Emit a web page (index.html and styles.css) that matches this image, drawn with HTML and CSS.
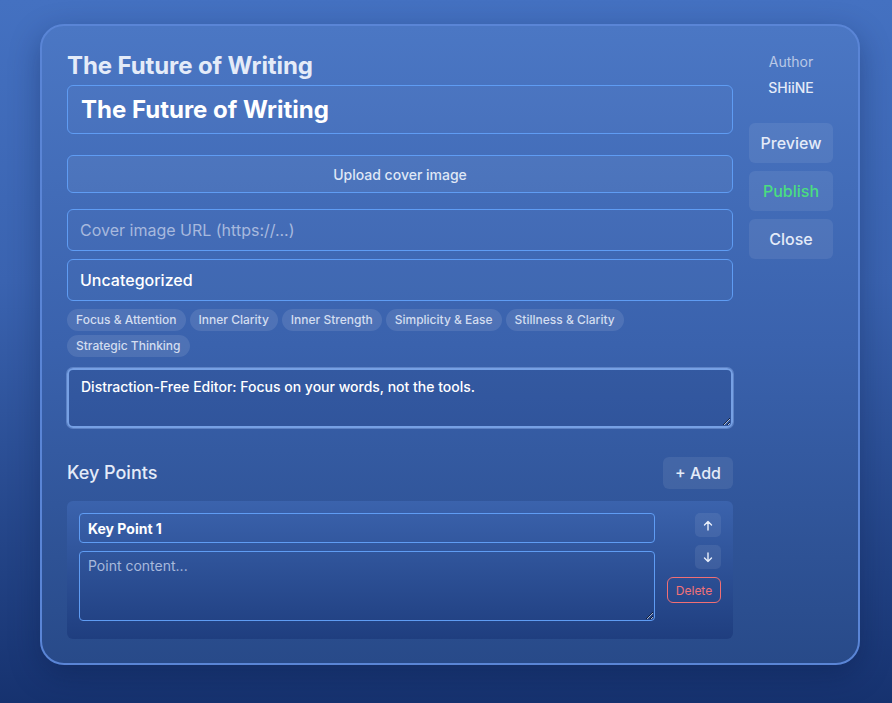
FILE: index.html
```html
<!DOCTYPE html>
<html lang="en">
<head>
<meta charset="utf-8">
<title>Editor</title>
<link rel="stylesheet" href="styles.css">
</head>
<body>
<div class="card">
  <div class="main">
    <h1 class="heading">The Future of Writing</h1>
    <input class="field title-field" type="text" value="The Future of Writing">
    <button class="upload">Upload cover image</button>
    <input class="field url-field" type="text" placeholder="Cover image URL (https://...)">
    <div class="field select-field">Uncategorized</div>
    <div class="tags">
      <span class="tag">Focus &amp; Attention</span>
      <span class="tag">Inner Clarity</span>
      <span class="tag">Inner Strength</span>
      <span class="tag">Simplicity &amp; Ease</span>
      <span class="tag">Stillness &amp; Clarity</span>
      <span class="tag">Strategic Thinking</span>
    </div>
    <textarea class="summary">Distraction-Free Editor: Focus on your words, not the tools.</textarea>
    <div class="kp-header">
      <h2 class="kp-title">Key Points</h2>
      <button class="add-btn">+ Add</button>
    </div>
    <div class="kp-box">
      <div class="kp-fields">
        <input class="kp-name" type="text" value="Key Point 1">
        <textarea class="kp-content" placeholder="Point content..."></textarea>
      </div>
      <div class="kp-controls">
        <button class="arrow-btn" aria-label="Move up"><svg width="10" height="11" viewBox="0 0 10 11"><path d="M5 10V1.5M1.5 5L5 1.5 8.5 5" fill="none" stroke="#e8eefa" stroke-width="1.4" stroke-linecap="round" stroke-linejoin="round"/></svg></button>
        <button class="arrow-btn" aria-label="Move down"><svg width="10" height="11" viewBox="0 0 10 11"><path d="M5 1v8.5M1.5 6L5 9.5 8.5 6" fill="none" stroke="#e8eefa" stroke-width="1.4" stroke-linecap="round" stroke-linejoin="round"/></svg></button>
        <button class="delete-btn">Delete</button>
      </div>
    </div>
  </div>
  <aside class="side">
    <div class="author-label">Author</div>
    <div class="author-name">SHiiNE</div>
    <div class="actions">
      <button class="side-btn">Preview</button>
      <button class="side-btn publish">Publish</button>
      <button class="side-btn">Close</button>
    </div>
  </aside>
</div>
</body>
</html>
```

FILE: styles.css
```css
* { box-sizing: border-box; }
html, body { height: 100%; }
body {
  margin: 0;
  padding: 24px 32px 0 40px;
  font-family: Inter, "Noto Sans", sans-serif;
  background: linear-gradient(180deg, #4471c1 0%, #3a63b0 40%, #16326f 100%);
  color: #fff;
  overflow: hidden;
}
button, input, textarea { font-family: inherit; }

.card {
  display: flex;
  gap: 16px;
  width: 820px;
  padding: 24px 25px 24px 25px;
  border: 2px solid #5a85d6;
  border-radius: 24px;
  background: linear-gradient(180deg, #4b77c4 0%, #3a62ad 50%, #284a89 100%);
  box-shadow: 0 10px 30px rgba(10, 25, 70, 0.35);
}

.main { flex: 1; display: flex; flex-direction: column; min-width: 0; }

.heading {
  margin: 1px 0 4px;
  font-size: 24px;
  line-height: 30px;
  font-weight: 700;
  letter-spacing: -0.1px;
  color: #e4ebf8;
}

.field {
  width: 100%;
  border: 1px solid #5f9cf3;
  border-radius: 6px;
  background: rgba(255, 255, 255, 0.02);
  color: #fff;
  outline: none;
}
.title-field {
  height: 49px;
  padding: 0 13px;
  font-size: 24px;
  font-weight: 700;
}
.upload {
  margin-top: 21px;
  height: 38px;
  border: 1px solid #5f9cf3;
  border-radius: 6px;
  background: rgba(255, 255, 255, 0.05);
  color: #dfe7f6;
  font-size: 14px;
  font-weight: 500;
}
.url-field {
  margin-top: 16px;
  height: 42px;
  padding: 0 12px;
  font-size: 16px;
}
.url-field::placeholder { color: #a7b9de; }
.select-field {
  margin-top: 8px;
  height: 42px;
  padding: 0 12px;
  font-size: 16px;
  font-weight: 500;
  display: flex;
  align-items: center;
}

.tags {
  margin-top: 8px;
  display: flex;
  flex-wrap: wrap;
  gap: 4px 4px;
  padding-right: 90px;
}
.tag {
  height: 22px;
  padding: 0 9px;
  border-radius: 11px;
  background: rgba(255, 255, 255, 0.1);
  color: #d3ddf0;
  font-size: 12px;
  font-weight: 500;
  line-height: 22px;
}

.summary {
  margin-top: 11px;
  height: 60px;
  width: 100%;
  padding: 7px 12px 5px;
  border: 2px solid #76a0e4;
  box-shadow: 0 0 0 1px rgba(140, 175, 235, 0.45);
  border-radius: 6px;
  background: rgba(10, 30, 90, 0.1);
  color: #fff;
  font-size: 14px;
  font-weight: 500;
  line-height: 20px;
  outline: none;
}

.kp-header {
  margin-top: 29px;
  display: flex;
  align-items: center;
  justify-content: space-between;
}
.kp-title {
  margin: 0 0 2px;
  font-size: 18px;
  font-weight: 500;
  color: #e4ebf8;
}
.add-btn {
  height: 32px;
  width: 70px;
  border: 0;
  border-radius: 6px;
  background: rgba(255, 255, 255, 0.08);
  color: #e4ebf8;
  font-size: 16px;
  font-weight: 500;
}

.kp-box {
  margin-top: 12px;
  display: flex;
  gap: 12px;
  padding: 12px 12px 18px;
  border-radius: 6px;
  background: linear-gradient(180deg, #3b63ad 0%, #1f3e7f 100%);
}
.kp-fields { flex: 1; display: flex; flex-direction: column; gap: 8px; }
.kp-name {
  height: 30px;
  padding: 0 8px;
  border: 1px solid #5f9cf3;
  border-radius: 4px;
  background: transparent;
  color: #fff;
  font-size: 14px;
  font-weight: 700;
  outline: none;
}
.kp-content {
  height: 70px;
  padding: 5px 8px;
  border: 1px solid #5f9cf3;
  border-radius: 4px;
  background: transparent;
  color: #fff;
  font-size: 14px;
  outline: none;
  display: block;
}
.kp-content::placeholder { color: #a8b9dc; }

.kp-controls {
  width: 54px;
  display: flex;
  flex-direction: column;
  align-items: flex-end;
  gap: 8px;
}
.arrow-btn {
  width: 26px;
  height: 24px;
  border: 0;
  border-radius: 5px;
  background: rgba(255, 255, 255, 0.08);
  padding: 0;
  display: flex;
  align-items: center;
  justify-content: center;
}
.delete-btn {
  width: 54px;
  height: 26px;
  border: 1px solid #f16f74;
  border-radius: 6px;
  background: transparent;
  color: #f27278;
  font-size: 12px;
  padding: 0;
}

.side {
  width: 84px;
  display: flex;
  flex-direction: column;
  align-items: center;
}
.author-label {
  margin-top: 2px;
  font-size: 14px;
  line-height: 20px;
  color: #b9c8e6;
}
.author-name {
  margin-top: 7px;
  font-size: 14px;
  line-height: 18px;
  font-weight: 500;
  color: #e4ebf8;
}
.actions {
  margin-top: 26px;
  width: 100%;
  display: flex;
  flex-direction: column;
  gap: 8px;
}
.side-btn {
  height: 40px;
  width: 100%;
  border: 0;
  border-radius: 6px;
  background: rgba(255, 255, 255, 0.08);
  color: #e4ebf8;
  font-size: 16px;
  font-weight: 500;
}
.side-btn.publish { color: #4ade80; }
```
